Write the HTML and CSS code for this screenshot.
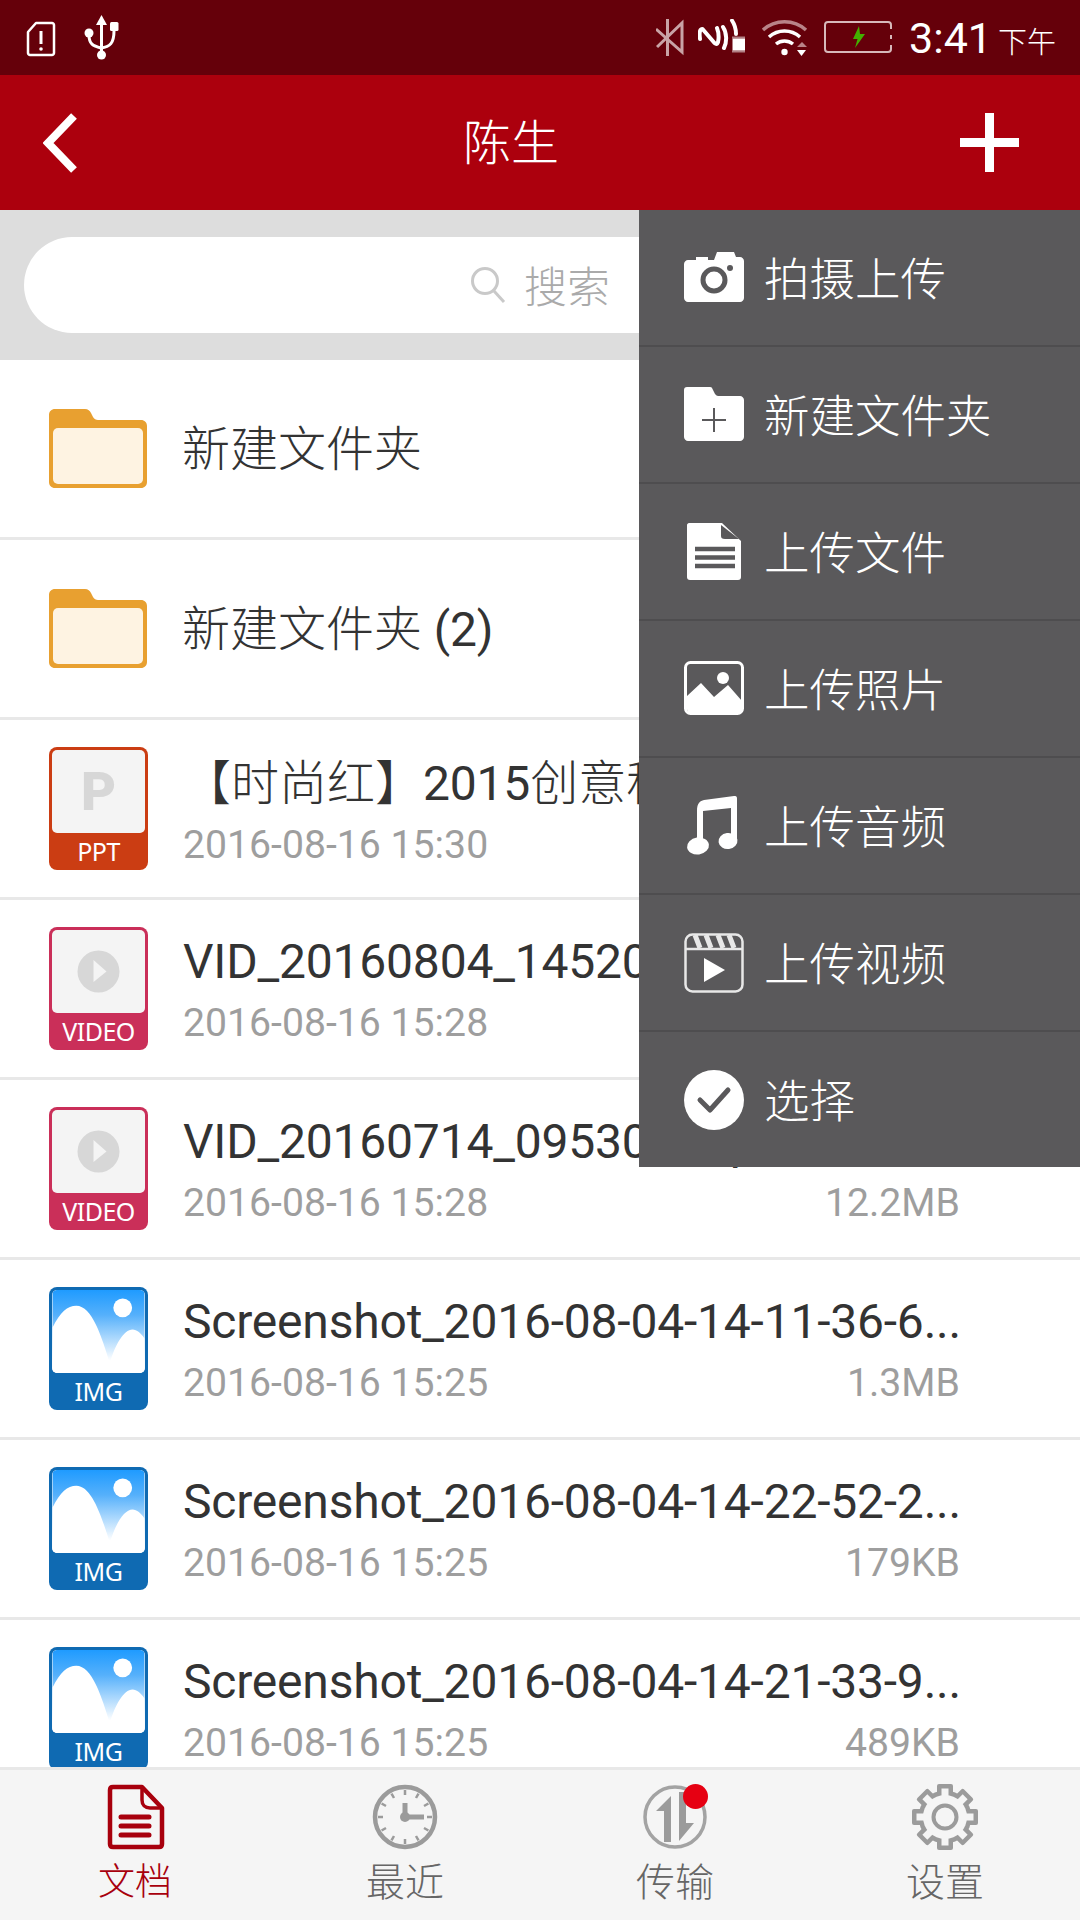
FILE: index.html
```html
<!DOCTYPE html>
<html lang="zh-CN">
<head>
<meta charset="utf-8">
<title>陈生</title>
<link rel="stylesheet" href="styles.css">
</head>
<body>
<svg class="defs" width="0" height="0" aria-hidden="true">
  <defs>
    <symbol id="folder" viewBox="0 0 98 79">
      <path fill="#e8a030" d="M6 0H36C39 0 41 2 42 4L44 8C45 10 47 11 49 11H92C95.500 11 98 13.500 98 17V73C98 76.500 95.500 79 92 79H6C2.500 79 0 76.500 0 73V6C0 2.500 2.500 0 6 0Z"/>
      <rect x="4" y="19" width="90" height="56" rx="5" fill="#fef3e2"/>
    </symbol>
    <symbol id="play" viewBox="0 0 93 82">
      <circle cx="46.500" cy="41" r="21" fill="#d7d7d7"/>
      <path d="M41.500 29.500 54.500 41 41.500 51.500Z" fill="#f4f4f4"/>
    </symbol>
    <symbol id="picture" viewBox="0 0 93 84">
      <defs>
        <linearGradient id="sky" x1="0" y1="0" x2="0" y2="1">
          <stop offset="0" stop-color="#1f9bff"/>
          <stop offset=".3" stop-color="#55b0fb"/>
          <stop offset=".85" stop-color="#ffffff"/>
        </linearGradient>
      </defs>
      <rect width="93" height="84" rx="4" fill="url(#sky)"/>
      <path fill="#fff" d="M0 38C8 22 15 16 24 16C40 16 50 48 58 74C63 56 72 40 81 40C85 40 90 44 93 49V80C93 82 91 84 89 84H4C2 84 0 82 0 80Z"/>
      <circle cx="71" cy="18" r="9.500" fill="#fff"/>
    </symbol>
  </defs>
</svg>
<div class="app">
  <div class="status">
    <div class="status-group">
      <svg class="st-sim" viewBox="0 0 30 36"><path d="M10 2H26C27 2 28 3 28 4V32C28 33 27 34 26 34H4C3 34 2 33 2 32V11Z" fill="none" stroke="#fff" stroke-width="2.500" stroke-linejoin="round"/><path d="M15 10V23" stroke="#fff" stroke-width="3"/><circle cx="15" cy="28" r="1.800" fill="#fff"/></svg>
      <svg class="st-usb" viewBox="0 0 36 46"><path d="M17.500 0 23 10H12Z" fill="#fff"/><path d="M17.500 8V40" stroke="#fff" stroke-width="3"/><circle cx="17.500" cy="40" r="4.500" fill="#fff"/><circle cx="5" cy="18" r="4.500" fill="#fff"/><path d="M5 20C5 29 9 31 17 33C26 32 30 28 30 16" fill="none" stroke="#fff" stroke-width="3"/><rect x="26" y="7" width="8.500" height="9" rx="1.500" fill="#fff"/></svg>
    </div>
    <div class="status-group status-right">
      <svg class="st-bt" viewBox="0 0 28 37"><path d="M0 10 26 33V4L1 28M11.500 0V37" fill="none" stroke="#c9a3a6" stroke-width="3"/></svg>
      <svg class="st-nfc" viewBox="0 0 49 34"><path d="M2 20Q0.500 10 4.500 10L16.500 24Q20 27 20.500 20Q21 14 19 9" fill="none" stroke="#fff" stroke-width="4" stroke-linecap="round" stroke-linejoin="round"/><path d="M25 8C29 14 29 23 26 29M34 1.500C37 6 38 10 38 15" fill="none" stroke="#fff" stroke-width="4" stroke-linecap="round"/><rect x="34.500" y="19.500" width="12.500" height="12" fill="#fff"/><path d="M34.500 18.500H47M34.500 32.500H47" stroke="#fff" stroke-width="2" stroke-dasharray="1 1"/></svg>
      <svg class="st-wifi" viewBox="0 0 49 36"><path d="M2 10C14 -1 33 -1 45 10" fill="none" stroke="#b98388" stroke-width="3.500"/><path d="M8 17C17 9 30 9 39 17M15 24C20 20 27 20 32 24" fill="none" stroke="#fff" stroke-width="3.500"/><circle cx="23.500" cy="32" r="3.200" fill="#fff"/><path d="M36 27 41 22 46 27Z" fill="#b98388"/><path d="M36 30H45L40.500 36Z" fill="#fff"/></svg>
      <svg class="st-bat" viewBox="0 0 71 32"><rect x="1" y="1" width="66" height="30" rx="3" fill="none" stroke="#d7b9bb" stroke-width="2"/><path d="M67 8V14M67 18V24" stroke="#65000a" stroke-width="2"/><path d="M35 5 29 18H33.500L31 27 41 13H36Z" fill="#43b000"/></svg>
      <div class="clock"><span class="clock-time">3:41</span><span class="clock-ampm">下午</span></div>
    </div>
  </div>

  <header class="appbar">
    <svg class="back" viewBox="0 0 36 60"><path d="M31 3 5 30 31 57" fill="none" stroke="#fff" stroke-width="8"/></svg>
    <div class="appbar-title">陈生</div>
    <svg class="plus" viewBox="0 0 59 59"><path d="M0 29.500H59M29.500 0V59" fill="none" stroke="#fff" stroke-width="9"/></svg>
  </header>

  <div class="search">
    <div class="search-pill">
      <svg class="search-icon" viewBox="0 0 36 38"><circle cx="15" cy="15" r="12.500" fill="none" stroke="#c9c9c9" stroke-width="3"/><path d="M24 25 34 36" stroke="#c9c9c9" stroke-width="3"/></svg>
      <span>搜索</span>
    </div>
  </div>

  <main class="list">
    <div class="row">
      <svg class="folder-icon"><use href="#folder"/></svg>
      <div class="row-body single"><div class="row-title"><span class="cjk">新建文件夹</span></div></div>
    </div>
    <div class="row">
      <svg class="folder-icon"><use href="#folder"/></svg>
      <div class="row-body single"><div class="row-title"><span class="cjk">新建文件夹</span> (2)</div></div>
    </div>
    <div class="row">
      <div class="file ppt"><div class="panel"><span class="panel-p">P</span></div><div class="file-label">PPT</div></div>
      <div class="row-body">
        <div class="row-title"><span class="cjk">【时尚红】</span>2015<span class="cjk">创意科技模板</span></div>
        <div class="row-meta"><span>2016-08-16 15:30</span></div>
      </div>
    </div>
    <div class="row">
      <div class="file video"><div class="panel"><svg class="panel-art"><use href="#play"/></svg></div><div class="file-label">VIDEO</div></div>
      <div class="row-body">
        <div class="row-title">VID_20160804_145200.mp4</div>
        <div class="row-meta"><span>2016-08-16 15:28</span></div>
      </div>
    </div>
    <div class="row">
      <div class="file video"><div class="panel"><svg class="panel-art"><use href="#play"/></svg></div><div class="file-label">VIDEO</div></div>
      <div class="row-body">
        <div class="row-title">VID_20160714_095300.mp4</div>
        <div class="row-meta"><span>2016-08-16 15:28</span><span>12.2MB</span></div>
      </div>
    </div>
    <div class="row">
      <div class="file image"><div class="panel"><svg class="panel-art"><use href="#picture"/></svg></div><div class="file-label">IMG</div></div>
      <div class="row-body">
        <div class="row-title">Screenshot_2016-08-04-14-11-36-6...</div>
        <div class="row-meta"><span>2016-08-16 15:25</span><span>1.3MB</span></div>
      </div>
    </div>
    <div class="row">
      <div class="file image"><div class="panel"><svg class="panel-art"><use href="#picture"/></svg></div><div class="file-label">IMG</div></div>
      <div class="row-body">
        <div class="row-title">Screenshot_2016-08-04-14-22-52-2...</div>
        <div class="row-meta"><span>2016-08-16 15:25</span><span>179KB</span></div>
      </div>
    </div>
    <div class="row">
      <div class="file image"><div class="panel"><svg class="panel-art"><use href="#picture"/></svg></div><div class="file-label">IMG</div></div>
      <div class="row-body">
        <div class="row-title">Screenshot_2016-08-04-14-21-33-9...</div>
        <div class="row-meta"><span>2016-08-16 15:25</span><span>489KB</span></div>
      </div>
    </div>
  </main>

  <nav class="tabs">
    <div class="tab active">
      <svg class="tab-icon" viewBox="0 0 66 66"><path d="M11 3H40L60 24V60C60 62 59 63 57 63H11C9 63 8 62 8 60V6C8 4 9 3 11 3Z" fill="none" stroke="#a8000d" stroke-width="4.500" stroke-linejoin="round"/><path d="M40 3V16C40 21 43 24 48 24H60" fill="none" stroke="#a8000d" stroke-width="3.500"/><path d="M19 33H47M19 42H47M19 51H47" stroke="#a8000d" stroke-width="5" stroke-linecap="round"/></svg>
      <span>文档</span>
    </div>
    <div class="tab">
      <svg class="tab-icon" viewBox="0 0 66 66"><circle cx="33" cy="33" r="30" fill="none" stroke="#9b9b9b" stroke-width="4.500"/><path d="M33 6V11M33 55V60M6 33H11M55 33H60M19.500 9.600 22 14M44 52 46.500 56.400M9.600 19.500 14 22M52 44 56.400 46.500M46.500 9.600 44 14M22 52 19.500 56.400M56.400 19.500 52 22M14 44 9.600 46.500" stroke="#9b9b9b" stroke-width="2.500"/><path d="M33 19V33H52" fill="none" stroke="#9b9b9b" stroke-width="5"/><circle cx="33" cy="33" r="5" fill="#9b9b9b"/></svg>
      <span>最近</span>
    </div>
    <div class="tab">
      <svg class="tab-icon" viewBox="0 0 66 66"><circle cx="33" cy="33" r="30" fill="none" stroke="#a3a3a3" stroke-width="3.500"/><path d="M14 27 29 12V58H22V27Z" fill="#9b9b9b"/><path d="M37 8H44V39H52L37 57Z" fill="#9b9b9b"/></svg>
      <span class="tab-badge"></span>
      <span>传输</span>
    </div>
    <div class="tab">
      <svg class="tab-icon" viewBox="0 0 66 66">
        <g fill="#9b9b9b"><rect x="25" y="0" width="16" height="66" rx="2"/><rect x="25" y="0" width="16" height="66" rx="2" transform="rotate(45 33 33)"/><rect x="25" y="0" width="16" height="66" rx="2" transform="rotate(90 33 33)"/><rect x="25" y="0" width="16" height="66" rx="2" transform="rotate(135 33 33)"/><circle cx="33" cy="33" r="26.500"/></g>
        <g fill="#f5f5f5"><rect x="29.500" y="4.500" width="7" height="57"/><rect x="29.500" y="4.500" width="7" height="57" transform="rotate(45 33 33)"/><rect x="29.500" y="4.500" width="7" height="57" transform="rotate(90 33 33)"/><rect x="29.500" y="4.500" width="7" height="57" transform="rotate(135 33 33)"/><circle cx="33" cy="33" r="22"/></g>
        <circle cx="33" cy="33" r="11.500" fill="none" stroke="#9b9b9b" stroke-width="4"/>
      </svg>
      <span>设置</span>
    </div>
  </nav>

  <aside class="menu">
    <div class="menu-item">
      <svg class="menu-icon" viewBox="0 0 60 60"><path d="M4 12H12V9H24V12H30L33 4H50L52 9H56C58 9 60 11 60 13V50C60 52 58 54 56 54H4C2 54 0 52 0 50V16C0 14 2 12 4 12Z" fill="#fff"/><circle cx="30" cy="32" r="11" fill="none" stroke="#5a595b" stroke-width="5"/><circle cx="46" cy="20" r="3" fill="#5a595b"/></svg>
      <span>拍摄上传</span>
    </div>
    <div class="menu-item">
      <svg class="menu-icon" viewBox="0 0 60 60"><path d="M3 2H26C28 2 28 3 29 5L31 9C32 10 33 11 34 11H56C58 11 60 13 60 15V52C60 54 58 56 56 56H4C2 56 0 54 0 52V5C0 3 1 2 3 2Z" fill="#fff"/><path d="M18 35H42M30 23V47" stroke="#5a595b" stroke-width="2"/></svg>
      <span>新建文件夹</span>
    </div>
    <div class="menu-item">
      <svg class="menu-icon" viewBox="0 0 60 60"><path d="M5 1H38L57 19V55C57 57 56 58 54 58H6C4 58 3 57 3 55V3C3 2 4 1 5 1Z" fill="#fff"/><path d="M37 3 55 17H41C38 17 37 16 37 14Z" fill="#5a595b"/><path d="M11 27H51M11 35.500H51M11 44H51" stroke="#5a595b" stroke-width="4.500"/></svg>
      <span>上传文件</span>
    </div>
    <div class="menu-item">
      <svg class="menu-icon" viewBox="0 0 60 60"><rect x="1.500" y="3.500" width="57" height="51" rx="5" fill="none" stroke="#fff" stroke-width="3"/><path d="M3 37 17 24 30 38 44 26 58 42V50C58 52 56 54 54 54H6C4 54 3 52 3 50Z" fill="#fff"/><circle cx="39" cy="19" r="6" fill="#fff"/></svg>
      <span>上传照片</span>
    </div>
    <div class="menu-item">
      <svg class="menu-icon" viewBox="0 0 60 60"><path d="M19 10V45H13V15C13 7 16 5 20 4L50 0C52 0 53 0 53 3V47H47V12L19 15Z" fill="#fff"/><ellipse cx="14" cy="50" rx="11" ry="8.500" fill="#fff" transform="rotate(-8 14 50)"/><ellipse cx="44" cy="45" rx="9.500" ry="8" fill="#fff" transform="rotate(-8 44 45)"/></svg>
      <span>上传音频</span>
    </div>
    <div class="menu-item">
      <svg class="menu-icon" viewBox="0 0 60 60"><rect x="1.500" y="1.500" width="57" height="57" rx="7" fill="none" stroke="#e8e8e8" stroke-width="2.500"/><path d="M2 16H58" stroke="#e8e8e8" stroke-width="2.500"/><path d="M11 2 16 15M22 2 27 15M34 2 39 15M45 2 50 15" stroke="#e8e8e8" stroke-width="5"/><path d="M20 25 41 37 20 49Z" fill="#fff"/></svg>
      <span>上传视频</span>
    </div>
    <div class="menu-item">
      <svg class="menu-icon" viewBox="0 0 60 60"><circle cx="30" cy="30" r="30" fill="#fff"/><path d="M16 30 26 40 44 20" fill="none" stroke="#5a595b" stroke-width="5" stroke-linecap="round" stroke-linejoin="round"/></svg>
      <span>选择</span>
    </div>
  </aside>
</div>
</body>
</html>
```
FILE: styles.css
```css
* { box-sizing: border-box; }
html, body { margin: 0; padding: 0; }
body { background: #fff; font-family: Roboto, "Noto Sans CJK SC", sans-serif; color: #333; }
.defs { position: absolute; }

.app { position: relative; display: flex; flex-direction: column; width: 1080px; height: 1920px; overflow: hidden; }

.status { flex: 0 0 75px; display: flex; align-items: center; justify-content: space-between; padding: 0 24px 0 26px; background: #65000a; color: #fff; }
.status-group { display: flex; align-items: center; gap: 28px; }
.status-right { gap: 14px; }
.st-sim { width: 30px; height: 36px; margin-top: 2px; }
.st-usb { width: 36px; height: 46px; }
.st-bt { width: 28px; height: 37px; }
.st-nfc { width: 49px; height: 34px; margin-top: -3px; }
.st-wifi { width: 49px; height: 36px; }
.st-bat { width: 71px; height: 32px; margin-top: -1px; }
.clock { display: flex; align-items: baseline; gap: 6px; }
.clock-time { font-size: 43px; line-height: 50px; }
.clock-ampm { font-size: 29px; font-family: "Noto Sans CJK SC", sans-serif; font-weight: 300; }

.appbar { flex: 0 0 135px; display: flex; align-items: center; padding: 0 61px 0 43px; background: #ac000d; }
.back { width: 36px; height: 60px; flex: none; }
.plus { width: 59px; height: 59px; flex: none; }
.appbar-title { flex: 1; text-align: center; padding: 0 17px 7px 0; font-size: 48px; color: #fff; font-weight: 300; font-family: "Noto Sans CJK SC", sans-serif; }

.search { flex: 0 0 150px; display: flex; align-items: center; padding: 0 24px; background: #ddd; }
.search-pill { flex: 1; height: 96px; display: flex; align-items: center; justify-content: center; gap: 18px; border-radius: 48px; background: #fff; color: #aaa; font-size: 43px; font-weight: 300; font-family: "Noto Sans CJK SC", sans-serif; }
.search-pill span { padding-bottom: 2px; }
.search-icon { width: 36px; height: 38px; }

.list { flex: 1; min-height: 0; overflow: hidden; }
.row { height: 180px; display: flex; align-items: center; gap: 35px; padding: 0 120px 0 49px; background: #fff; border-bottom: 3px solid #e8e8e8; }
.row-body { flex: 1; min-width: 0; padding-top: 2px; }
.row-body.single { padding: 0 0 3px; }
.row-title { font-size: 48px; line-height: 60px; color: #333; white-space: nowrap; font-weight: 400; letter-spacing: -0.2px; }
.cjk { font-family: "Noto Sans CJK SC", sans-serif; font-weight: 300; letter-spacing: 0; }
.row-meta { display: flex; justify-content: space-between; margin-top: 6px; font-size: 39.200px; line-height: 50px; color: #9e9e9e; }

.folder-icon { width: 98px; height: 79px; flex: none; }

.file { width: 99px; height: 123px; flex: none; display: flex; flex-direction: column; align-items: stretch; padding: 3px 3px 0; border-radius: 8px; overflow: hidden; }
.file.ppt { background: #cb3d13; }
.file.video { background: #ca2f59; }
.file.image { background: #0f6ab2; }
.panel { height: 83px; display: flex; align-items: center; justify-content: center; border-radius: 5px; background: #f4f4f4; overflow: hidden; }
.panel-art { width: 93px; height: 100%; display: block; }
.panel-p { font-family: Roboto, sans-serif; font-weight: 900; font-size: 54px; line-height: 1; color: #d7d7d7; }
.file-label { flex: 1; display: flex; align-items: center; justify-content: center; color: #fff; font-family: "Noto Sans", sans-serif; font-size: 25px; line-height: 1; letter-spacing: -0.5px; }

.tabs { flex: 0 0 153px; display: grid; grid-template-columns: repeat(4, 1fr); padding: 14px 0 0; margin-top: -3px; position: relative; background: #f5f5f5; border-top: 3px solid #e8e8e8; }
.tab { position: relative; display: flex; flex-direction: column; align-items: center; font-size: 39px; line-height: 48px; color: #666; font-weight: 300; font-family: "Noto Sans CJK SC", sans-serif; }
.tab.active { color: #a8000d; font-size: 37px; }
.tab-icon { width: 66px; height: 66px; display: block; margin-bottom: 5px; }
.tab-badge { position: absolute; top: 0; left: 143px; width: 25px; height: 25px; border-radius: 50%; background: #e60012; }

.menu { position: absolute; top: 210px; right: 0; width: 441px; height: 957px; display: flex; flex-direction: column; background: #5a595b; color: #fff; }
.menu-item { flex: 1; display: flex; align-items: center; gap: 20px; padding-left: 45px; font-size: 45.500px; font-weight: 300; font-family: "Noto Sans CJK SC", sans-serif; border-bottom: 2px solid #4e4d4f; }
.menu-item span { padding-bottom: 3px; }
.menu-item:last-child { border-bottom: 0; }
.menu-icon { width: 60px; height: 60px; flex: none; }
```
